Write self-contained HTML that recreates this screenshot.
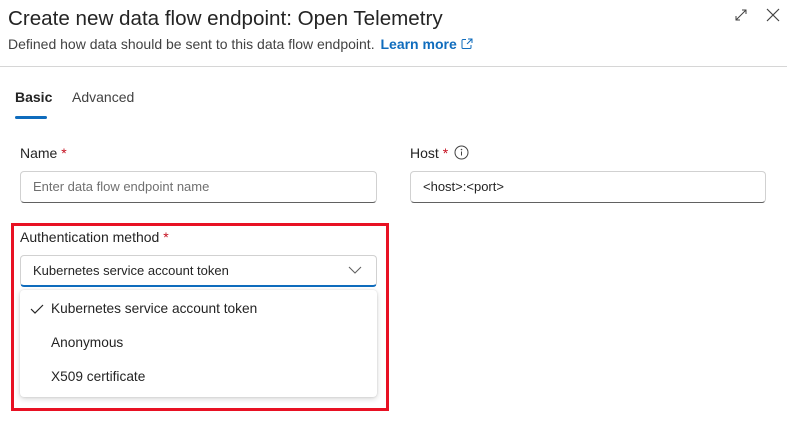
<!DOCTYPE html>
<html><head><style>
*{box-sizing:border-box;margin:0;padding:0}
body{width:787px;height:423px;background:#fff;font-family:"Liberation Sans",sans-serif;color:#242424;position:relative;overflow:hidden}
.a{position:absolute;white-space:nowrap}
.inp{position:absolute;border:1px solid #d1d1d1;border-bottom:1px solid #616161;border-radius:4px;height:32px;font-size:13px;padding:0 12px;line-height:30px}
.req{color:#c50f1f}
</style></head><body>
<div class="a" style="left:8px;top:7px;font-size:20.6px">Create new data flow endpoint: Open Telemetry</div>
<div class="a" style="left:8px;top:36px;font-size:14px;color:#424242">Defined how data should be sent to this data flow endpoint. <span style="color:#0f6cbd;font-weight:bold;margin-left:2px">Learn more</span>
<svg width="12" height="12" viewBox="0 0 12 12" style="vertical-align:-1px"><path d="M5 1.5H2a1 1 0 0 0-1 1v7a1 1 0 0 0 1 1h7a1 1 0 0 0 1-1V7M7 1h4v4M11 1L6 6" fill="none" stroke="#0f6cbd" stroke-width="1"/></svg></div>
<svg class="a" style="left:734px;top:8px" width="14" height="14" viewBox="0 0 14 14"><path d="M2 12L12 2M8 2h4v4M2 8v4h4" fill="none" stroke="#424242" stroke-width="1"/></svg>
<svg class="a" style="left:766px;top:8px" width="14" height="14" viewBox="0 0 14 14"><path d="M1 1L13 13M13 1L1 13" fill="none" stroke="#424242" stroke-width="1.2"/></svg>
<div class="a" style="left:0;top:66px;width:787px;height:1px;background:#d6d6d6"></div>
<div class="a" style="left:15px;top:89px;font-size:14px;font-weight:bold">Basic</div>
<div class="a" style="left:72px;top:89px;font-size:14px;color:#424242">Advanced</div>
<div class="a" style="left:15px;top:116px;width:32px;height:3px;border-radius:2px;background:#0f6cbd"></div>
<div class="a" style="left:20px;top:145px;font-size:14px">Name <span class="req">*</span></div>
<div class="inp" style="left:20px;top:171px;width:357px;color:#707070">Enter data flow endpoint name</div>
<div class="a" style="left:410px;top:145px;font-size:14px">Host <span class="req">*</span>
<svg width="15" height="15" viewBox="0 0 15 15" style="vertical-align:-2px;margin-left:2px"><circle cx="7.5" cy="7.5" r="6.5" fill="none" stroke="#424242"/><path d="M7.5 6.5v4" stroke="#424242"/><circle cx="7.5" cy="4.5" r=".8" fill="#424242"/></svg></div>
<div class="inp" style="left:410px;top:171px;width:356px">&lt;host&gt;:&lt;port&gt;</div>
<div class="a" style="left:11px;top:223px;width:378px;height:188px;border:3px solid #e81123"></div>
<div class="a" style="left:20px;top:229px;font-size:14px">Authentication method <span class="req">*</span></div>
<div class="inp" style="left:20px;top:255px;width:357px;border-bottom:2px solid #0f6cbd">Kubernetes service account token</div>
<svg class="a" style="left:348px;top:265px" width="14" height="10" viewBox="0 0 14 10"><path d="M1 2l6 6 6-6" fill="none" stroke="#616161" stroke-width="1.1"/></svg>
<div class="a" style="left:20px;top:290px;width:357px;height:107px;border-radius:4px;background:#fff;box-shadow:0 2px 6px rgba(0,0,0,.16),0 0 2px rgba(0,0,0,.12)"></div>
<svg class="a" style="left:30px;top:303px" width="14" height="12" viewBox="0 0 14 12"><path d="M1 6l4 4 8-8" fill="none" stroke="#242424" stroke-width="1.2"/></svg>
<div class="a" style="left:51px;top:301px;font-size:13.7px">Kubernetes service account token</div>
<div class="a" style="left:51px;top:335px;font-size:13.7px">Anonymous</div>
<div class="a" style="left:51px;top:369px;font-size:13.7px">X509 certificate</div>
</body></html>
